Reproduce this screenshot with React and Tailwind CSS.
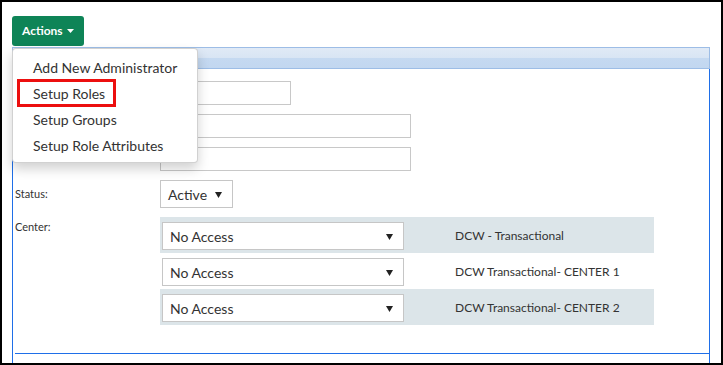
import React from "react";

const Arrow = () => (
  <svg width="7" height="7" viewBox="0 0 7 7" className="shrink-0">
    <path d="M0 1h7L3.5 7z" fill="#222" />
  </svg>
);

const FakeSelect = ({ value, className }) => (
  <div
    className={`flex items-center justify-between bg-white border border-[#c6c6c6] pl-[7px] pr-[10px] text-[14px] text-[#333] ${className}`}
  >
    <span>{value}</span>
    <Arrow />
  </div>
);

const menuItems = ["Add New Administrator", "Setup Roles", "Setup Groups", "Setup Role Attributes"];

const centers = [
  { name: "DCW - Transactional", shaded: true },
  { name: "DCW Transactional- CENTER 1", shaded: false },
  { name: "DCW Transactional- CENTER 2", shaded: true },
];

export default function App() {
  return (
    <div className="w-[723px] h-[365px] box-border border-2 border-black bg-white overflow-hidden font-['Lato',sans-serif]">
      <div className="pl-[10px] pr-[11px] pt-[14px]">
        {/* Actions button + open menu */}
        <div className="relative w-[72px]">
          <button className="h-[30px] w-[72px] rounded-[3px] bg-[#0e8457] text-white text-[12px] font-bold flex items-center pl-[10px] gap-[4px]">
            Actions
            <svg width="7" height="4" viewBox="0 0 7 4">
              <path d="M0 0h7L3.5 4z" fill="#fff" />
            </svg>
          </button>

          <div className="absolute left-0 top-[32px] z-10 w-[186px] h-[115px] bg-white border border-[rgba(0,0,0,0.18)] rounded-[4px] shadow-[0_6px_12px_rgba(0,0,0,0.18)] pt-[5px]">
            {menuItems.map((item) => (
              <div key={item} className="relative h-[26px] flex items-center pl-[20px] text-[14px] text-[#333]">
                {item === "Setup Roles" && (
                  <span className="absolute left-[4px] -top-[1px] w-[99px] h-[28px] border-[3px] border-[#ec0f0f]"></span>
                )}
                {item}
              </div>
            ))}
          </div>
        </div>

        {/* Panel */}
        <div className="mt-[1px]">
          <div className="h-[22px] border border-[#9dbde6] bg-[linear-gradient(#e0eaf6_0%,#d8e5f4_50%,#c5d9f1_50%,#c2d7f0_100%)]"></div>
          <div className="h-[300px] border-l border-r border-[#1f6fe8] pt-[12px] pl-[2px]">
            <div className="flex flex-col gap-[9px]">
              <div className="flex">
                <div className="w-[145px]"></div>
                <div className="w-[131px] h-[24px] border border-[#c8c8c8]"></div>
              </div>
              <div className="flex">
                <div className="w-[145px]"></div>
                <div className="w-[251px] h-[24px] border border-[#c8c8c8]"></div>
              </div>
              <div className="flex">
                <div className="w-[145px]"></div>
                <div className="w-[251px] h-[24px] border border-[#c8c8c8]"></div>
              </div>
              <div className="flex items-center">
                <div className="w-[145px] text-[11px] text-[#333]">Status:</div>
                <FakeSelect value="Active" className="w-[73px] h-[28px]" />
              </div>
              <div className="flex items-start">
                <div className="w-[145px] text-[11px] text-[#333] pt-[2px]">Center:</div>
                <div className="w-[494px]">
                  {centers.map((c) => (
                    <div
                      key={c.name}
                      className={`h-[36px] flex items-start pt-[5px] ${c.shaded ? "bg-[#dce5e9]" : "bg-white"}`}
                    >
                      <FakeSelect value="No Access" className="ml-[2px] w-[242px] h-[28px]" />
                      <div className="ml-[51px] h-[28px] flex items-center text-[12px] text-[#333]">{c.name}</div>
                    </div>
                  ))}
                </div>
              </div>
            </div>
            <div className="mt-[28px] h-px bg-[#1f6fe8]"></div>
          </div>
        </div>
      </div>
    </div>
  );
}
